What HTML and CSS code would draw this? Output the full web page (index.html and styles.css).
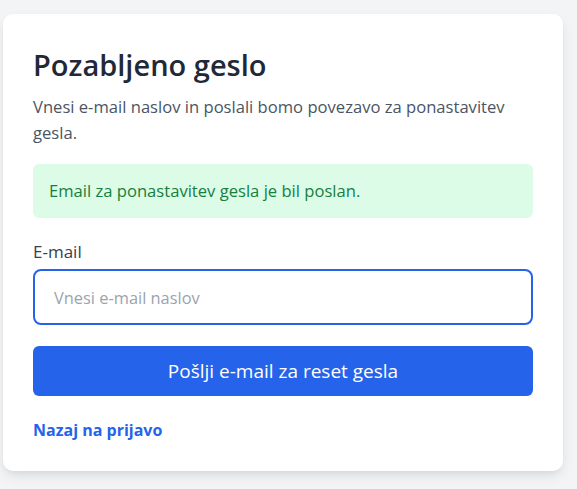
FILE: index.html
```html
<!DOCTYPE html>
<html lang="sl">
<head>
<meta charset="utf-8">
<title>Pozabljeno geslo</title>
<link rel="stylesheet" href="styles.css">
</head>
<body>
<main class="card">
  <h1 class="title">Pozabljeno geslo</h1>
  <p class="intro">Vnesi e-mail naslov in poslali bomo povezavo za ponastavitev gesla.</p>
  <div class="alert">Email za ponastavitev gesla je bil poslan.</div>
  <form class="form">
    <label class="label" for="email">E-mail</label>
    <input class="input" id="email" type="email" placeholder="Vnesi e-mail naslov">
    <button class="button" type="button">Pošlji e-mail za reset gesla</button>
  </form>
  <a class="back" href="#">Nazaj na prijavo</a>
</main>
</body>
</html>
```
FILE: styles.css
```css
* { box-sizing: border-box; }
html, body { margin: 0; }
body {
  background: #f3f4f6;
  font-family: "Open Sans", "Noto Sans", sans-serif;
  color: #374151;
  padding: 14px 14px 19px 3px;
}
.card {
  width: 560px;
  background: #fff;
  border-radius: 10px;
  box-shadow: 0 6px 14px -2px rgba(0,0,0,0.10), 0 3px 6px -3px rgba(0,0,0,0.08);
  padding: 33px 30px 31px;
  display: flex;
  flex-direction: column;
}
.title {
  margin: 0;
  font-size: 29px;
  line-height: 36px;
  font-weight: 600;
  color: #1f2937;
}
.intro {
  margin: 11px 0 0;
  font-size: 16.6px;
  line-height: 26px;
  color: #4b5563;
}
.alert {
  margin-top: 18px;
  background: #dcfce7;
  color: #15803d;
  border-radius: 6px;
  padding: 16px;
  font-size: 16.6px;
  line-height: 22px;
}
.form {
  display: flex;
  flex-direction: column;
  margin-top: 22px;
}
.label {
  font-size: 17px;
  line-height: 24px;
  color: #374151;
}
.input {
  margin-top: 5px;
  height: 56px;
  border: 2px solid #2563eb;
  border-radius: 8px;
  padding: 0 19px;
  font: inherit;
  font-size: 16.4px;
  color: #111827;
  outline: none;
}
.input::placeholder { color: #9ca3af; }
.button {
  margin-top: 21px;
  height: 50px;
  border: 0;
  border-radius: 6px;
  background: #2563eb;
  color: #fff;
  font: inherit;
  font-size: 19px;
}
.back {
  margin-top: 24px;
  align-self: flex-start;
  font-size: 16px;
  line-height: 20px;
  font-weight: 700;
  color: #2563eb;
  text-decoration: none;
}
```
